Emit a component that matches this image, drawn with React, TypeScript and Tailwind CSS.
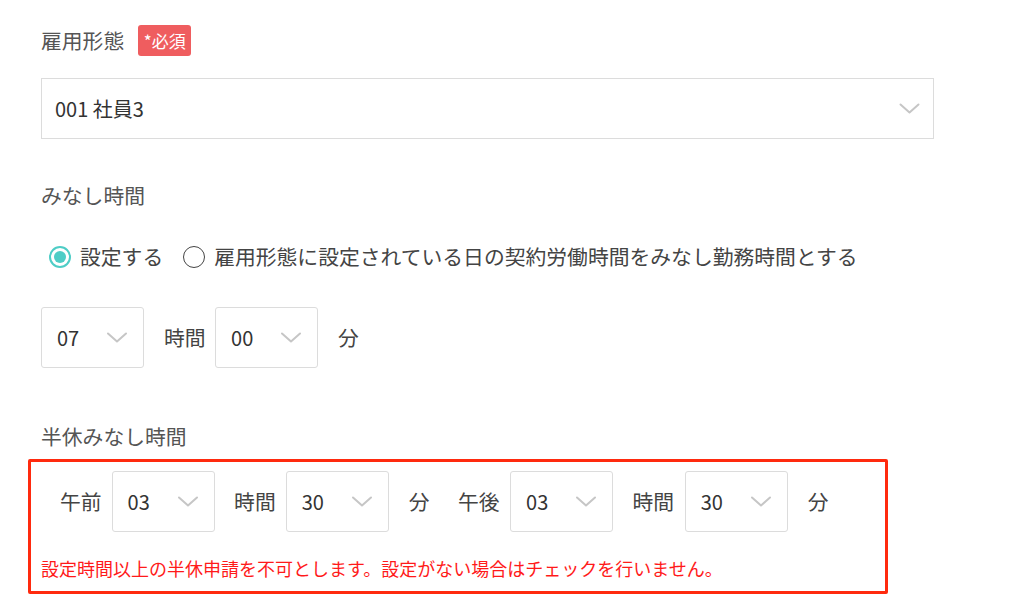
import React from 'react';

const font = { fontFamily: '"Noto Sans CJK JP", "Noto Sans", sans-serif' };

const Chevron: React.FC<{ className?: string }> = ({ className }) => (
  <svg viewBox="0 0 20 11" className={className} fill="none">
    <path d="M1 1.5 L10 9.5 L19 1.5" stroke="#c6c6c6" strokeWidth="2" strokeLinecap="round" strokeLinejoin="round" />
  </svg>
);

const TimeSelect: React.FC<{ value: string }> = ({ value }) => (
  <div className="flex items-center justify-between w-[103px] h-[61px] border border-[#dcdcdc] rounded-[3px] bg-white pl-[15px] pr-[16px] shrink-0">
    <span className="text-[20px] text-[#333]">{value}</span>
    <Chevron className="w-[20px] h-[11px]" />
  </div>
);

const Radio: React.FC<{ checked?: boolean; label: string }> = ({ checked, label }) => (
  <label className="flex items-center">
    {checked ? (
      <span className="w-[22px] h-[22px] rounded-full border-2 border-[#4ecdc6] flex items-center justify-center">
        <span className="w-[12px] h-[12px] rounded-full bg-[#4ecdc6]" />
      </span>
    ) : (
      <span className="w-[22px] h-[22px] rounded-full border-[1.5px] border-[#444]" />
    )}
    <span className="ml-[9px] text-[20.8px] text-[#444]">{label}</span>
  </label>
);

export default function App() {
  return (
    <div className="min-h-screen bg-white text-[#555]" style={font}>
      <div className="pl-[41px] pt-[25px]">
        {/* 雇用形態 */}
        <div className="flex items-center h-[31px]">
          <span className="text-[20.8px] text-[#555] leading-none">雇用形態</span>
          <span className="ml-[14px] h-[31px] w-[53px] rounded-[3px] bg-[#ef5d5f] text-white text-[17px] flex items-center justify-center">*必須</span>
        </div>
        <div className="mt-[22px] w-[893px] h-[61px] border border-[#dcdcdc] flex items-center justify-between pl-[13px] pr-[13px]">
          <span className="text-[20px] text-[#333]">001 社員3</span>
          <Chevron className="w-[21px] h-[11px]" />
        </div>

        {/* みなし時間 */}
        <div className="mt-[41px] h-[30px] leading-[30px] text-[20.8px]">みなし時間</div>
        <div className="mt-[32px] h-[30px] flex items-center pl-[8px]">
          <Radio checked label="設定する" />
          <span className="w-[20px]" />
          <Radio label="雇用形態に設定されている日の契約労働時間をみなし勤務時間とする" />
        </div>
        <div className="mt-[35px] flex items-center h-[61px] text-[20.8px] text-[#444]">
          <TimeSelect value="07" />
          <span className="ml-[20px] mr-[9.5px]">時間</span>
          <TimeSelect value="00" />
          <span className="ml-[20px]">分</span>
        </div>

        {/* 半休みなし時間 */}
        <div className="mt-[53px] h-[30px] leading-[30px] text-[20.8px]">半休みなし時間</div>
        <div className="mt-[8px] -ml-[13px] w-[860px] border-[3px] border-[#ff2a0e] rounded-[2px] pl-[10px] pt-[9px] pb-[11px]">
          <div className="flex items-center h-[61px] pl-[19px] text-[20.8px] text-[#444]">
            <span className="mr-[10px]">午前</span>
            <TimeSelect value="03" />
            <span className="ml-[19.5px] mr-[10px]">時間</span>
            <TimeSelect value="30" />
            <span className="ml-[20px]">分</span>
            <span className="ml-[28.5px] mr-[10.5px]">午後</span>
            <TimeSelect value="03" />
            <span className="ml-[19.5px] mr-[10.5px]">時間</span>
            <TimeSelect value="30" />
            <span className="ml-[20px]">分</span>
          </div>
          <div className="mt-[24px] h-[24px] leading-[24px] text-[18px] text-[#ff1a1a]">
            設定時間以上の半休申請を不可とします。設定がない場合はチェックを行いません。
          </div>
        </div>
      </div>
    </div>
  );
}
